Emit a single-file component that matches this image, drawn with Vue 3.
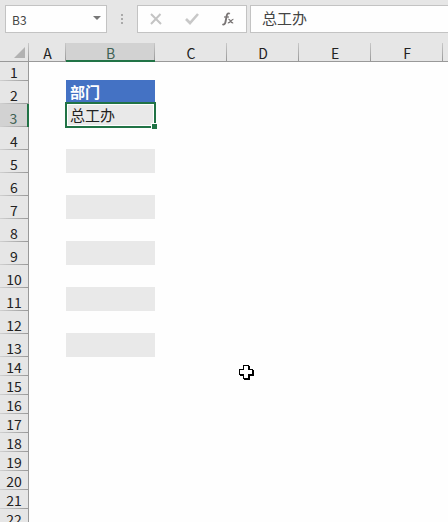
<template>
  <div class="excel">
    <!-- FORMULA BAR -->
    <div class="bar">
      <div class="name-box">
        <input type="text" v-model="cellName" aria-label="Name Box" />
        <button type="button" class="caret" aria-label="Open name list"></button>
      </div>
      <div class="dots"><i></i><i></i><i></i></div>
      <div class="tools">
        <button type="button" aria-label="Cancel">
          <svg width="12" height="12" viewBox="0 0 12 12">
            <path d="M1 1L11 11M10.5 1L1 11" fill="none" stroke="#c4c4c4" stroke-width="2" />
          </svg>
        </button>
        <button type="button" aria-label="Enter">
          <svg width="14" height="12" viewBox="0 0 14 12">
            <path d="M1 6L5 10L13 1" fill="none" stroke="#c8c8c8" stroke-width="2.6" />
          </svg>
        </button>
        <button type="button" aria-label="Insert Function">
          <svg width="14" height="14" viewBox="0 0 14 14" fill="none" stroke="#787474">
            <path d="M8.8 1.8C7.4 .8 6.2 1.6 5.8 3.4L4.4 10.2C4 12.2 2.8 13 1.4 12.2" stroke-width="1.9" />
            <path d="M3 5H8" stroke-width="1.2" />
            <path d="M7.4 7.4C9.6 6.8 9.2 11.4 12.2 10.8M12.4 7.3C10.5 7.1 9.4 11.3 6.8 10.9" stroke-width="1.3" />
          </svg>
        </button>
      </div>
      <input type="text" class="formula" v-model="cellValue" aria-label="Formula Bar" />
    </div>

    <!-- SHEET -->
    <table class="sheet">
      <colgroup>
        <col class="col-head" />
        <col class="col-a" />
        <col class="col-b" />
        <col v-for="n in 4" :key="n" class="col-std" />
        <col />
      </colgroup>
      <thead>
        <tr>
          <th class="corner"></th>
          <th v-for="col in columns" :key="col" scope="col" :class="{ active: col === 'B' }">{{ col }}</th>
          <th class="rest"></th>
        </tr>
      </thead>
      <tbody>
        <tr v-for="row in 22" :key="row" :class="{ tall: row > 1 && row < 14 }">
          <th scope="row" :class="{ active: row === 3 }">{{ row }}</th>
          <td></td>
          <td :class="cellClass(row)">
            {{ cells[row] }}
            <div v-if="row === 3" class="selection"><span class="handle"></span></div>
          </td>
          <td v-for="n in 5" :key="n"></td>
        </tr>
      </tbody>
    </table>

    <!-- MOUSE POINTER -->
    <svg class="pointer" width="15" height="15" viewBox="0 0 15 15" shape-rendering="crispEdges">
      <path d="M5 1H11V5H15V11H11V15H5V11H1V5H5Z" fill="#000" />
      <path d="M4 0H10V4H14V10H10V14H4V10H0V4H4Z" fill="#000" />
      <path d="M5 1H9V5H13V9H9V13H5V9H1V5H5Z" fill="#fff" />
    </svg>
  </div>
</template>

<script setup>
import { ref } from 'vue'

/* DATA */
const columns = ['A', 'B', 'C', 'D', 'E', 'F']
const cells = { 2: '部门', 3: '总工办' }
const cellName = ref('B3')
const cellValue = ref('总工办')

/* TABLE BANDING */
const cellClass = (row) => ({
  title: row === 2,
  band: row > 2 && row < 14 && row % 2 === 1,
  selected: row === 3
})
</script>

<style>
body {
  margin: 0;
  overflow: hidden;
}
</style>

<style scoped>
.excel {
  position: relative;
  height: 100vh;
  overflow: hidden;
  background: #fefefe;
  font-family: 'Noto Sans CJK SC', sans-serif;
  font-size: 14px;
  color: #222;
}

input,
button {
  box-sizing: border-box;
  margin: 0;
  padding: 0;
  border: 0;
  outline: 0;
  background: none;
  font-family: inherit;
  color: #444;
}

/* formula bar */
.bar {
  display: flex;
  height: 43px;
  box-sizing: border-box;
  padding: 5px 0 10px 5px;
  background: #e6e6e6;
}

.name-box,
.tools,
.formula {
  box-sizing: border-box;
  height: 28px;
  border: 1px solid #c3c3c3;
  background: #fefefe;
}

.name-box {
  display: flex;
  width: 102px;
}

.name-box input {
  flex: 1;
  min-width: 0;
  padding-left: 6px;
  font-size: 12px;
}

.caret {
  width: 18px;
}

.caret::before {
  content: '';
  display: block;
  width: 0;
  margin: 0 auto 2px;
  border: 4px solid transparent;
  border-top-color: #777;
  border-bottom: 0;
}

.dots {
  display: flex;
  flex-direction: column;
  align-items: center;
  justify-content: center;
  gap: 2px;
  width: 30px;
}

.dots i {
  width: 2px;
  height: 2px;
  background: #aaa;
}

.tools {
  display: flex;
  width: 110px;
}

.tools button {
  display: flex;
  flex: 1;
  align-items: center;
  justify-content: center;
}

.formula {
  flex: 1;
  min-width: 0;
  margin-left: 3px;
  padding: 0 0 4px 11px;
  border-right: 0;
  font-size: 15px;
}

/* grid */
.sheet {
  width: 100%;
  table-layout: fixed;
  border-spacing: 0;
}

.col-head {
  width: 29px;
}

.col-a {
  width: 37px;
}

.col-b {
  width: 89px;
}

.col-std {
  width: 72px;
}

th,
td {
  box-sizing: border-box;
  height: 19px;
  padding: 0;
  line-height: 16px;
}

th {
  font-weight: 400;
  vertical-align: bottom;
  background: #e6e6e6;
}

tbody th {
  padding-bottom: 1px;
}

thead th {
  border-bottom: 1px solid #999;
  background: linear-gradient(#c8c8c8, #999) right / 1px 100% no-repeat #e6e6e6;
}

thead th.rest {
  background: #e6e6e6;
}

thead th.active {
  border-bottom: 2px solid #217346;
  line-height: 14px;
  background-color: #d2d2d2;
}

.corner::after {
  content: '';
  display: block;
  width: 0;
  margin: 0 0 3px 14px;
  border-left: 11px solid transparent;
  border-bottom: 11px solid #b2b2b2;
}

tbody th {
  border-right: 1px solid #999;
  background: linear-gradient(90deg, #d0d0d0, #999) bottom / 100% 1px no-repeat #e6e6e6;
}

tbody th.active {
  border-right: 2px solid #217346;
  background-color: #d2d2d2;
}

th.active {
  color: #3f6254;
}

.tall th,
.tall td {
  height: 23px;
}

td {
  padding-left: 4px;
  font-size: 15px;
}

.tall td {
  padding-bottom: 2px;
  line-height: 20px;
}

/* fills also cover the gridline above */
.title {
  font-weight: 700;
  color: #fff;
  background: #4472c4;
  box-shadow: 0 -1px #4472c4;
}

.band {
  background: #e9e9e9;
  box-shadow: 0 -1px #e9e9e9;
}

.selected {
  position: relative;
}

.selection {
  position: absolute;
  inset: -2px -1px -1px;
  border: 2px solid #217346;
  box-shadow: inset 0 0 0 1px #fff;
}

.handle {
  position: absolute;
  right: -3px;
  bottom: -3px;
  width: 5px;
  height: 5px;
  border: 1px solid #fff;
  border-width: 1px 0 0 1px;
  background: #217346;
}

.pointer {
  position: absolute;
  left: 239px;
  top: 365px;
}
</style>
